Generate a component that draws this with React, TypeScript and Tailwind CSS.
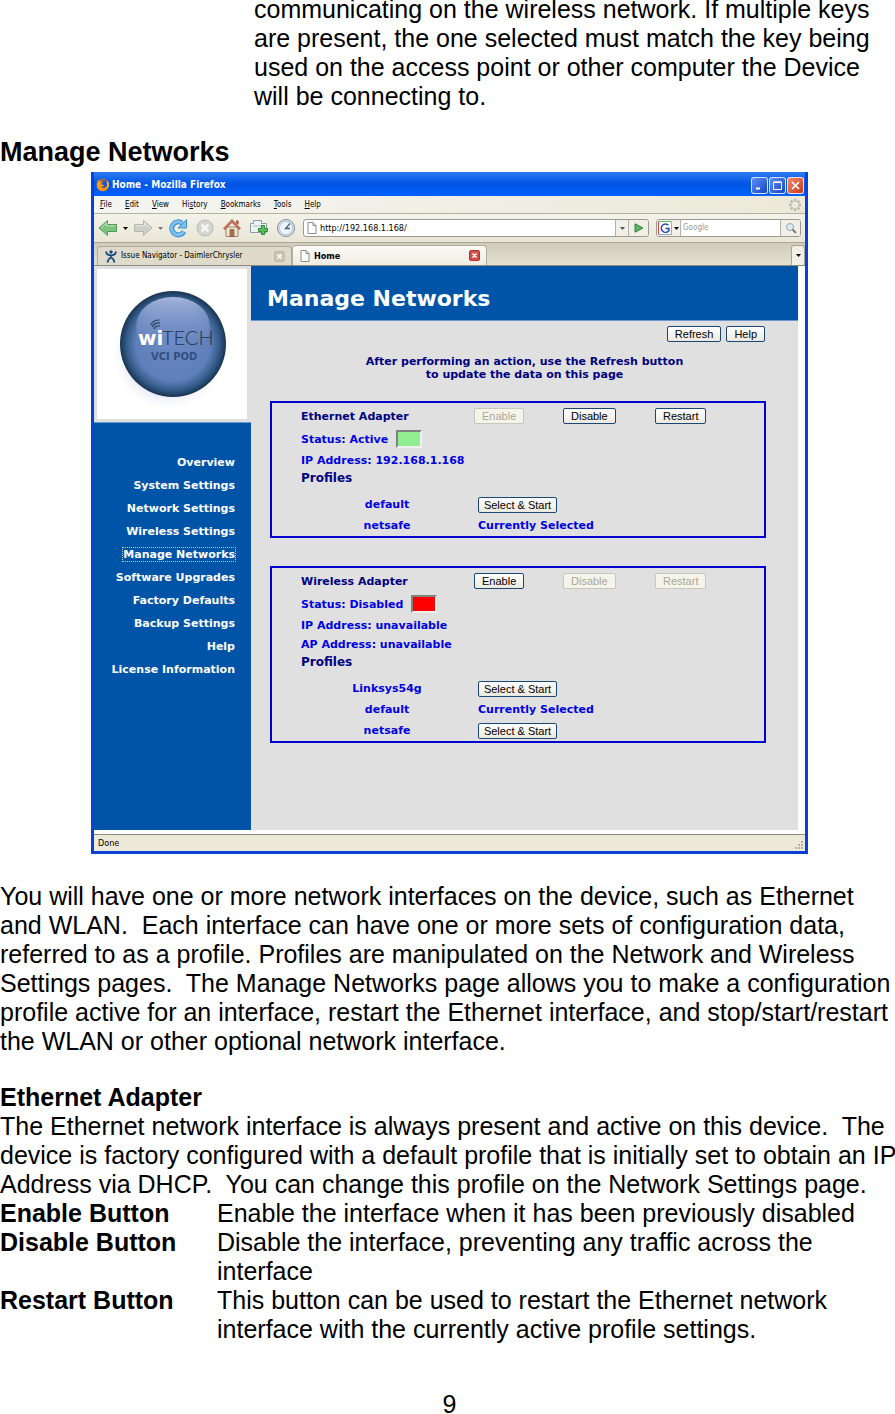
import type { ReactNode } from "react";
import { clsx } from "clsx";

const MENUS = [
  ["", "F", "ile"],
  ["", "E", "dit"],
  ["", "V", "iew"],
  ["Hi", "s", "tory"],
  ["", "B", "ookmarks"],
  ["", "T", "ools"],
  ["", "H", "elp"],
];

const NAV = [
  "Overview",
  "System Settings",
  "Network Settings",
  "Wireless Settings",
  "Manage Networks",
  "Software Upgrades",
  "Factory Defaults",
  "Backup Settings",
  "Help",
  "License Information",
];

type Adapter = {
  name: string;
  status: string;
  active: boolean;
  addresses: string[];
  profiles: { name: string; selected: boolean }[];
};

const ADAPTERS: Adapter[] = [
  {
    name: "Ethernet Adapter",
    status: "Active",
    active: true,
    addresses: ["IP Address: 192.168.1.168"],
    profiles: [
      { name: "default", selected: false },
      { name: "netsafe", selected: true },
    ],
  },
  {
    name: "Wireless Adapter",
    status: "Disabled",
    active: false,
    addresses: ["IP Address: unavailable", "AP Address: unavailable"],
    profiles: [
      { name: "Linksys54g", selected: false },
      { name: "default", selected: true },
      { name: "netsafe", selected: false },
    ],
  },
];

const BUTTON_HELP = [
  { term: "Enable Button", text: "Enable the interface when it has been previously disabled" },
  { term: "Disable Button", text: "Disable the interface, preventing any traffic across the\ninterface" },
  {
    term: "Restart Button",
    text: "This button can be used to restart the Ethernet network\ninterface with the currently active profile settings.",
  },
];

/* ---------- browser icons ---------- */

function FirefoxIcon() {
  return (
    <svg viewBox="0 0 14 14" className="size-[14px]">
      <circle cx="7" cy="7" r="6" fill="#e66a00" />
      <circle cx="7.6" cy="6" r="3.8" fill="#2a55b8" />
      <path d="M1 5 2 2l2 1.4 3.2.2L5.4 5.4l.8 1.4 2 .3c-.6 2-2.6 2-3.6 1.4C6 11 10 10.800 11.200 7.800 12 11 9.500 13.200 7 13.200A6.200 6.200 0 0 1 1 5Z" fill="#f79a1c" />
      <path d="M12 3.500c1.400 3 .8 6-1.500 8 1-2.500 1.300-5 .2-8Z" fill="#ffd34d" />
    </svg>
  );
}

function ArrowIcon({ flip, fill, stroke }: { flip?: boolean; fill: string; stroke: string }) {
  return (
    <svg viewBox="0 0 20 18" className={clsx("h-[18px] w-5", flip && "-scale-x-100")}>
      <path d="M1 9 9.500 1.500V5.500H18.500V12.500H9.500V16.500Z" fill={fill} stroke={stroke} strokeLinejoin="round" />
      <path d="M3 9 8.500 4V6.800H17" fill="none" stroke="#fff" strokeOpacity=".55" />
    </svg>
  );
}

function ReloadIcon() {
  return (
    <svg viewBox="0 0 20 20" className="size-5">
      <path d="M16 13.500A6.500 6.500 0 1 1 14 5" fill="none" stroke="#3f8fd0" strokeWidth="5" />
      <path d="M15.700 13.500A6.500 6.500 0 1 1 14 5" fill="none" stroke="#7cc0ee" strokeWidth="3" />
      <path d="M18.500 1.500V10H10Z" fill="#7cc0ee" stroke="#3f8fd0" />
    </svg>
  );
}

function StopIcon() {
  return (
    <svg viewBox="0 0 20 20" className="size-5">
      <circle cx="10" cy="10" r="8" fill="#d4d4d0" stroke="#bcbcb8" />
      <path d="m6.500 6.500 7 7m0-7-7 7" stroke="#f6f6f4" strokeWidth="2.500" />
    </svg>
  );
}

function HomeIcon() {
  return (
    <svg viewBox="0 0 20 20" className="size-5">
      <path d="M4 9h12v9.500H4Z" fill="#efe3d2" stroke="#a08468" />
      <path d="M14 2.500h2.500V7L14 5Z" fill="#b5503d" />
      <path d="m1.500 10.500 8.500-9 8.500 9-1.500 1L10 4.500l-7 7Z" fill="#c9765e" stroke="#9b4e3c" strokeWidth=".7" />
      <path d="M8 11.500h4v7H8Z" fill="#a9714e" stroke="#7c4e33" strokeWidth=".6" />
    </svg>
  );
}

function NewTabIcon() {
  return (
    <svg viewBox="0 0 20 20" className="size-5">
      <path d="M4.500 2.500h8v3h5v9h-16v-9h3Z" fill="#eef3f6" stroke="#8c9ba6" />
      <path d="M4 7h12v2H4Z" fill="#c9d7e0" />
      <path d="M12.500 7.500h3v3h3v3h-3v3h-3v-3h-3v-3h3Z" fill="#58bf5a" stroke="#2e8c36" />
    </svg>
  );
}

function ClockIcon() {
  return (
    <svg viewBox="0 0 20 20" className="size-5">
      <circle cx="10" cy="10" r="8.500" fill="#d5dfe9" stroke="#8193a6" />
      <circle cx="10" cy="10" r="6.500" fill="#f0f5fa" stroke="#a9b8c8" strokeWidth=".7" />
      <path d="M14 5.500 9.500 10.500H14" fill="none" stroke="#4a5f78" strokeWidth="1.300" />
    </svg>
  );
}

function PageIcon() {
  return (
    <svg viewBox="0 0 10 12" className="h-3 w-[10px] shrink-0">
      <path d="M1 .5h5l3 3v8H1Z" fill="#fff" stroke="#8a8a86" />
      <path d="M6 .5v3h3" fill="#ddd" stroke="#8a8a86" />
    </svg>
  );
}

function Caret({ className = "text-black" }: { className?: string }) {
  return (
    <svg viewBox="0 0 5 3" className={clsx("h-[3px] w-[5px] shrink-0", className)}>
      <path d="M0 0h5L2.500 3Z" fill="currentColor" />
    </svg>
  );
}

function ThrobberIcon() {
  const dots = [0, 1, 2, 3, 4, 5, 6, 7];
  return (
    <svg viewBox="0 0 14 14" className="size-[14px]">
      {dots.map((d) => (
        <rect key={d} x="5.800" y="1" width="2.600" height="2.600" fill="#b9b8b0" transform={`rotate(${d * 45} 7 7)`} />
      ))}
    </svg>
  );
}

function JiraIcon() {
  return (
    <svg viewBox="0 0 12 13" className="h-[13px] w-3 shrink-0">
      <circle cx="6" cy="2" r="1.700" fill="#1a4a80" />
      <path d="M1 1.500c.5 3 2.500 4 5 4s4.500-1 5-4M6 5v3M2.500 12.500C3 9.500 4.500 8 6 7.500c1.500.5 3 2 3.500 5" fill="none" stroke="#1a4a80" strokeWidth="1.800" />
    </svg>
  );
}

function WindowButton({ label, close, children }: { label: string; close?: boolean; children: ReactNode }) {
  return (
    <button
      type="button"
      aria-label={label}
      className={clsx(
        "flex size-[17px] items-center justify-center rounded-[3px] border border-white/80 bg-linear-to-br",
        close ? "from-[#f08a6c] to-[#c93210]" : "from-[#5e8df5] to-[#1746c4]",
      )}
    >
      <svg viewBox="0 0 11 11" className="size-[11px]" fill="none" stroke="#fff">
        {children}
      </svg>
    </button>
  );
}

function TitleBar() {
  return (
    <div className="flex h-6 items-center bg-linear-to-b from-[#2b7bf5] via-[#0054e3] to-[#0061fb] pt-[2px] pl-[2px]">
      <FirefoxIcon />
      <span className="ml-[2px] flex-1 font-['DejaVu_Sans_Condensed','DejaVu_Sans',sans-serif] text-[10px] font-bold text-white">
        Home - Mozilla Firefox
      </span>
      <div className="mr-px flex gap-px">
        <WindowButton label="Minimize">
          <path d="M2 8.500h4" strokeWidth="2" />
        </WindowButton>
        <WindowButton label="Maximize">
          <path d="M1.500 2.500h8v7h-8ZM1.500 1.800h8" />
        </WindowButton>
        <WindowButton label="Close" close>
          <path d="m2 2 7 7m0-7-7 7" strokeWidth="1.700" />
        </WindowButton>
      </div>
    </div>
  );
}

function MenuBar() {
  return (
    <div className="flex h-[18px] items-center justify-between border-b border-[#b5b2a0] bg-linear-to-r from-[#f5f5f2] to-[#ece9d8] pr-[3px] pl-[6px] text-[8px]">
      <div className="flex gap-[13px]">
        {MENUS.map(([before, key, after]) => (
          <button key={key + after} type="button">
            {before}
            <u>{key}</u>
            {after}
          </button>
        ))}
      </div>
      <ThrobberIcon />
    </div>
  );
}

function ToolBar() {
  return (
    <div className="flex h-[29px] items-center border-b border-[#aca899] bg-linear-to-b from-[#f4f3ea] to-[#e9e6d6] pr-1 pl-1">
      <button type="button" aria-label="Back" className="flex items-center gap-[5px]">
        <ArrowIcon fill="#7cc47c" stroke="#4e9a54" />
        <Caret />
      </button>
      <button type="button" aria-label="Forward" className="ml-[5px] flex items-center gap-[5px]">
        <ArrowIcon flip fill="#cfcfca" stroke="#b4b4ae" />
        <Caret className="text-[#777]" />
      </button>
      <div className="mr-[7px] ml-[5px] flex gap-[7px]">
        <button type="button" aria-label="Reload">
          <ReloadIcon />
        </button>
        <button type="button" aria-label="Stop">
          <StopIcon />
        </button>
        <button type="button" aria-label="Home">
          <HomeIcon />
        </button>
        <button type="button" aria-label="New tab">
          <NewTabIcon />
        </button>
        <button type="button" aria-label="History">
          <ClockIcon />
        </button>
      </div>
      <div className="flex h-[18px] flex-1 items-stretch overflow-hidden rounded-[3px] border border-[#9a9a94] bg-white">
        <span className="flex w-4 items-center justify-center">
          <PageIcon />
        </span>
        <input aria-label="Location" defaultValue="http://192.168.1.168/" className="min-w-0 flex-1 outline-none" />
        <button
          type="button"
          aria-label="Show history"
          className="flex w-[13px] items-center justify-center border-l border-[#b5b2a5] bg-[#f1efe6]"
        >
          <Caret className="text-[#555]" />
        </button>
        <button
          type="button"
          aria-label="Go"
          className="flex w-5 items-center justify-center border-l border-[#b5b2a5] bg-[#f1efe6]"
        >
          <svg viewBox="0 0 10 10" className="size-[10px]">
            <path d="M1 .8 9 5 1 9.200Z" fill="#5ab368" stroke="#2c8540" />
          </svg>
        </button>
      </div>
      <div className="ml-[7px] flex h-[18px] w-[145px] items-stretch overflow-hidden rounded-[3px] border border-[#9a9a94] bg-white">
        <button
          type="button"
          aria-label="Search engine"
          className="flex w-6 items-center justify-center gap-[2px] border-r border-[#b5b2a5] bg-[#f1efe6]"
        >
          <svg viewBox="0 0 14 14" className="size-[14px]">
            <path d="M.5.5h13v13H.5Z" fill="#fff" />
            <path d="M.5 13.500V.5" stroke="#d44" />
            <path d="M.5.5h13" stroke="#6b6" />
            <path d="M13.500.5v13M.5 13.500h13" stroke="#9ab" />
            <path d="M10.500 4.300A4.200 4.200 0 1 0 11 9.500V7.500H7.500" fill="none" stroke="#2448a8" strokeWidth="1.400" />
          </svg>
          <Caret />
        </button>
        <input
          aria-label="Search"
          placeholder="Google"
          className="min-w-0 flex-1 pl-[2px] text-[8px] outline-none placeholder:text-[#999]"
        />
        <button
          type="button"
          aria-label="Go search"
          className="flex w-5 items-center justify-center border-l border-[#b5b2a5] bg-[#f1efe6]"
        >
          <svg viewBox="0 0 12 12" className="size-3" fill="none">
            <circle cx="5" cy="5" r="3.500" fill="#dcebf5" stroke="#94a4b0" />
            <path d="m7.500 7.500 3.500 3.500" stroke="#7d7d78" strokeWidth="2" />
          </svg>
        </button>
      </div>
    </div>
  );
}

function BrowserTab({ title, icon, active }: { title: string; icon: ReactNode; active?: boolean }) {
  return (
    <div
      className={clsx(
        "flex w-[195px] items-center rounded-t-[4px] border border-b-0 border-[#b0ad9c] pr-[6px] pl-[7px]",
        active
          ? "bg-linear-to-b from-[#fbfaf6] to-[#efede2] text-[9px] font-bold"
          : "mt-px bg-[#dedbcb] text-[8px]",
      )}
    >
      {icon}
      <span className="ml-1 flex-1 whitespace-nowrap">{title}</span>
      <button
        type="button"
        aria-label={`Close ${title}`}
        className={clsx(
          "flex size-[11px] items-center justify-center rounded-[2px] border",
          active ? "border-[#a33] bg-[#d4504c]" : "border-[#bdbaab] bg-[#c9c6b8]",
        )}
      >
        <svg viewBox="0 0 5 5" className="size-[5px]">
          <path d="m.5.5 4 4m0-4-4 4" stroke="#fff" strokeWidth="1.500" />
        </svg>
      </button>
    </div>
  );
}

function TabStrip() {
  return (
    <div className="flex h-[23px] items-stretch border-b border-[#8f8c7c] bg-linear-to-b from-[#cfccbc] to-[#e4e1d2] pt-[2px] pl-[3px]">
      <BrowserTab title="Issue Navigator - DaimlerChrysler" icon={<JiraIcon />} />
      <BrowserTab title="Home" icon={<PageIcon />} active />
      <button
        type="button"
        aria-label="List all tabs"
        className="ml-auto flex w-[14px] items-center justify-center rounded-t-[3px] border border-b-0 border-[#a8a595] bg-[#f1efe6]"
      >
        <Caret />
      </button>
    </div>
  );
}

/* ---------- device page ---------- */

function Logo() {
  return (
    <svg viewBox="0 0 150 150" className="size-[150px]" role="img" aria-label="wiTECH VCI POD">
      <defs>
        <radialGradient id="ball" cx=".5" cy=".5" r=".5">
          <stop offset="0" stopColor="#6b8ac4" />
          <stop offset=".7" stopColor="#5f7fba" />
          <stop offset=".88" stopColor="#335a88" />
          <stop offset="1" stopColor="#16344f" />
        </radialGradient>
        <linearGradient id="shine" x1="0" y1="0" x2="0" y2="1">
          <stop offset="0" stopColor="#a6b6de" />
          <stop offset="1" stopColor="#6684c0" stopOpacity="0" />
        </linearGradient>
        <radialGradient id="glow">
          <stop offset=".6" stopColor="#d3d6f3" />
          <stop offset="1" stopColor="#fff" stopOpacity="0" />
        </radialGradient>
      </defs>
      <rect width="150" height="150" fill="#fff" />
      <ellipse cx="71" cy="86" rx="58" ry="57" fill="url(#glow)" />
      <circle cx="76" cy="75" r="53" fill="url(#ball)" />
      <ellipse cx="76" cy="57" rx="37" ry="29" fill="url(#shine)" />
      <g fill="none" stroke="#27415f" strokeWidth="1.200">
        <path d="M57 60a5 5 0 0 1 6-3" />
        <path d="M55 58a8 8 0 0 1 8-4" />
        <path d="M53.500 56a10 10 0 0 1 9-5" />
      </g>
      <text x="41" y="76" fontFamily="DejaVu Sans, sans-serif" fontSize="20" fontWeight="bold" fill="#fff">
        wi
      </text>
      <text x="65" y="76" fontFamily="Lato, sans-serif" fontSize="20" fontWeight="300" fill="#1f3550">
        TECH
      </text>
      <text x="54" y="91" fontFamily="DejaVu Sans, sans-serif" fontSize="10" fontWeight="bold" fill="#324f80">
        VCI POD
      </text>
    </svg>
  );
}

function XpButton({ children, disabled, wide }: { children: ReactNode; disabled?: boolean; wide?: boolean }) {
  return (
    <button
      type="button"
      disabled={disabled}
      className={clsx(
        "flex h-4 items-center justify-center rounded-[2px] border px-[7px] font-['Liberation_Sans',sans-serif] text-[11px] leading-[12px] font-normal whitespace-nowrap",
        wide && "w-[79px]",
        disabled
          ? "border-[#c9c7ba] bg-[#f5f4ea] text-[#a9a797]"
          : "border-[#1c4673] bg-linear-to-b from-white to-[#ebe9df] text-black",
      )}
    >
      {children}
    </button>
  );
}

function AdapterPanel({ adapter }: { adapter: Adapter }) {
  return (
    <section className="border-2 border-[#0000d0] pl-[29px] text-[#0000e0]">
      <div className="grid h-[26px] grid-cols-[173px_89px_92px_1fr] items-center justify-items-start">
        <h2 className="text-[#000080]">{adapter.name}</h2>
        <XpButton disabled={adapter.active}>Enable</XpButton>
        <XpButton disabled={!adapter.active}>Disable</XpButton>
        <XpButton disabled={!adapter.active}>Restart</XpButton>
      </div>
      <p className="mb-[2px] flex h-5 items-center gap-2">
        Status: {adapter.status}
        <span
          className={clsx(
            "h-[18px] w-[26px] border-2 border-t-[#808080] border-r-[#f0f0f0] border-b-[#f0f0f0] border-l-[#808080]",
            adapter.active ? "bg-[#90ee90]" : "bg-[#ff0000]",
          )}
        />
      </p>
      {adapter.addresses.map((address) => (
        <p key={address} className="leading-[19px]">
          {address}
        </p>
      ))}
      <h3 className="text-[12px] leading-[17px] text-[#000080]">Profiles</h3>
      <table className="mt-[7px] w-full">
        <tbody>
          {adapter.profiles.map((profile) => (
            <tr key={profile.name} className="h-[21px]">
              <th scope="row" className="w-[172px] p-0 text-center">
                {profile.name}
              </th>
              <td className="p-0 pl-[5px]">
                {profile.selected ? "Currently Selected" : <XpButton wide>Select &amp; Start</XpButton>}
              </td>
            </tr>
          ))}
        </tbody>
      </table>
    </section>
  );
}

function DevicePage() {
  return (
    <div className="flex bg-white pr-[7px] font-['DejaVu_Sans',sans-serif] text-[11px] leading-[13px] font-bold">
      <aside className="w-[157px] shrink-0 bg-[#0054a8]">
        <div className="border-b border-[#6a97cc] bg-[#e0e0e0] py-[3px] pl-[3px]">
          <Logo />
        </div>
        <nav className="flex flex-col items-end pt-7 pr-4 text-white">
          {NAV.map((item) => (
            <a key={item} href="#" className="flex h-[23px] items-center">
              <span className={clsx(item === "Manage Networks" && "outline-1 outline-[#d8c8a0] outline-dotted")}>
                {item}
              </span>
            </a>
          ))}
        </nav>
      </aside>
      <main className="flex-1 bg-[#e0e0e0] pb-[87px]">
        <h1 className="border-b border-[#6a97cc] bg-[#0054a8] pt-[21px] pb-[9px] pl-4 text-[22px] leading-[24px] text-white">
          Manage Networks
        </h1>
        <div className="flex justify-end gap-[5px] pt-[5px] pr-[33px]">
          <XpButton>Refresh</XpButton>
          <XpButton>Help</XpButton>
        </div>
        <p className="mt-[13px] text-center text-[#000080]">
          After performing an action, use the Refresh button
          <br />
          to update the data on this page
        </p>
        <div className="mt-5 mr-8 ml-[19px] flex flex-col gap-7">
          {ADAPTERS.map((adapter) => (
            <AdapterPanel key={adapter.name} adapter={adapter} />
          ))}
        </div>
      </main>
    </div>
  );
}

function BrowserWindow() {
  return (
    <figure className="mr-[87px] ml-[91px] border-x-[3px] border-b-[3px] border-[#0a3fd8] font-['DejaVu_Sans_Condensed','DejaVu_Sans',sans-serif] text-[9px] leading-[12px] text-black">
      <TitleBar />
      <MenuBar />
      <ToolBar />
      <TabStrip />
      <DevicePage />
      <div className="flex h-[21px] flex-col bg-white pt-1">
        <div className="flex flex-1 items-center justify-between border-t border-[#8f8c7c] bg-[#ece9d8] pl-1">
          <span>Done</span>
          <svg viewBox="0 0 12 12" className="mt-[3px] size-3" fill="#b5b29f">
            <path d="M8 2h2v2H8zM8 5h2v2H8zM5 5h2v2H5zM8 8h2v2H8zM5 8h2v2H5zM2 8h2v2H2z" />
          </svg>
        </div>
      </div>
    </figure>
  );
}

export default function App() {
  return (
    <div className="overflow-x-hidden bg-white font-['Liberation_Sans',Arial,sans-serif] text-[25px] leading-[29px] text-black">
      <p className="-mt-[5px] pl-[254px] whitespace-pre">
        {`communicating on the wireless network. If multiple keys
are present, the one selected must match the key being
used on the access point or other computer the Device
will be connecting to.`}
      </p>
      <h2 className="mt-[26px] mb-[5px] text-[27px] leading-[30px] font-bold">Manage Networks</h2>
      <BrowserWindow />
      <p className="mt-7 whitespace-pre">
        {`You will have one or more network interfaces on the device, such as Ethernet
and WLAN.  Each interface can have one or more sets of configuration data,
referred to as a profile. Profiles are manipulated on the Network and Wireless
Settings pages.  The Manage Networks page allows you to make a configuration
profile active for an interface, restart the Ethernet interface, and stop/start/restart
the WLAN or other optional network interface.`}
      </p>
      <h3 className="mt-[27px] font-bold">Ethernet Adapter</h3>
      <p className="whitespace-pre">
        {`The Ethernet network interface is always present and active on this device.  The
device is factory configured with a default profile that is initially set to obtain an IP
Address via DHCP.  You can change this profile on the Network Settings page.`}
      </p>
      <dl className="grid grid-cols-[217px_1fr]">
        {BUTTON_HELP.map(({ term, text }) => (
          <div key={term} className="contents">
            <dt className="font-bold">{term}</dt>
            <dd className="whitespace-pre">{text}</dd>
          </div>
        ))}
      </dl>
      <footer className="mt-[51px] pl-1 text-center leading-[18px]">9</footer>
    </div>
  );
}
